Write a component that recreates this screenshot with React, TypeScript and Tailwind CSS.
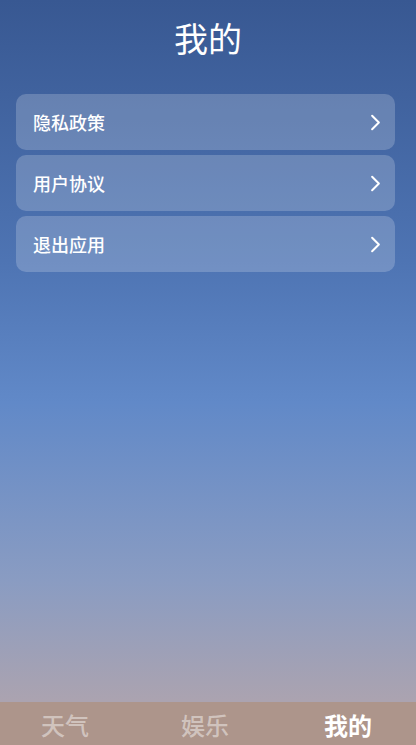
import { ChevronRight } from "lucide-react";

const items = ["隐私政策", "用户协议", "退出应用"];
const tabs = [
  { label: "天气", active: false, width: "w-[130px]" },
  { label: "娱乐", active: false, width: "w-[150px]" },
  { label: "我的", active: true, width: "w-[136px]" },
];

export default function App() {
  return (
    <div
      className="flex h-[745px] w-[416px] flex-col overflow-hidden bg-[linear-gradient(180deg,#385892_0%,#4e74b3_35%,#6189c8_54%,#8a9cc2_78%,#aba3b0_94%)]"
      style={{ fontFamily: '"Noto Sans CJK SC", "Noto Sans", sans-serif' }}
    >
      <header className="flex h-[76px] items-center justify-center">
        <h1 className="text-[34px] font-normal leading-none text-white">我的</h1>
      </header>

      <main className="flex flex-1 flex-col gap-[5px] pl-4 pr-[21px] pt-[18px]">
        {items.map((item) => (
          <div
            key={item}
            className="flex h-[56px] items-center justify-between rounded-[10px] bg-white/20 pl-[17px] pr-[6px]"
          >
            <span className="text-[18px] font-medium text-white">{item}</span>
            <ChevronRight className="h-[27px] w-[27px] text-white" strokeWidth={1.8} />
          </div>
        ))}
      </main>

      <nav className="flex h-[43px] items-start bg-[#ad958b] pt-[11px]">
        {tabs.map((tab) => (
          <span
            key={tab.label}
            className={`${tab.width} text-center text-[24px] leading-none ${
              tab.active ? "font-bold text-white" : "font-medium text-white/45"
            }`}
          >
            {tab.label}
          </span>
        ))}
      </nav>
    </div>
  );
}
